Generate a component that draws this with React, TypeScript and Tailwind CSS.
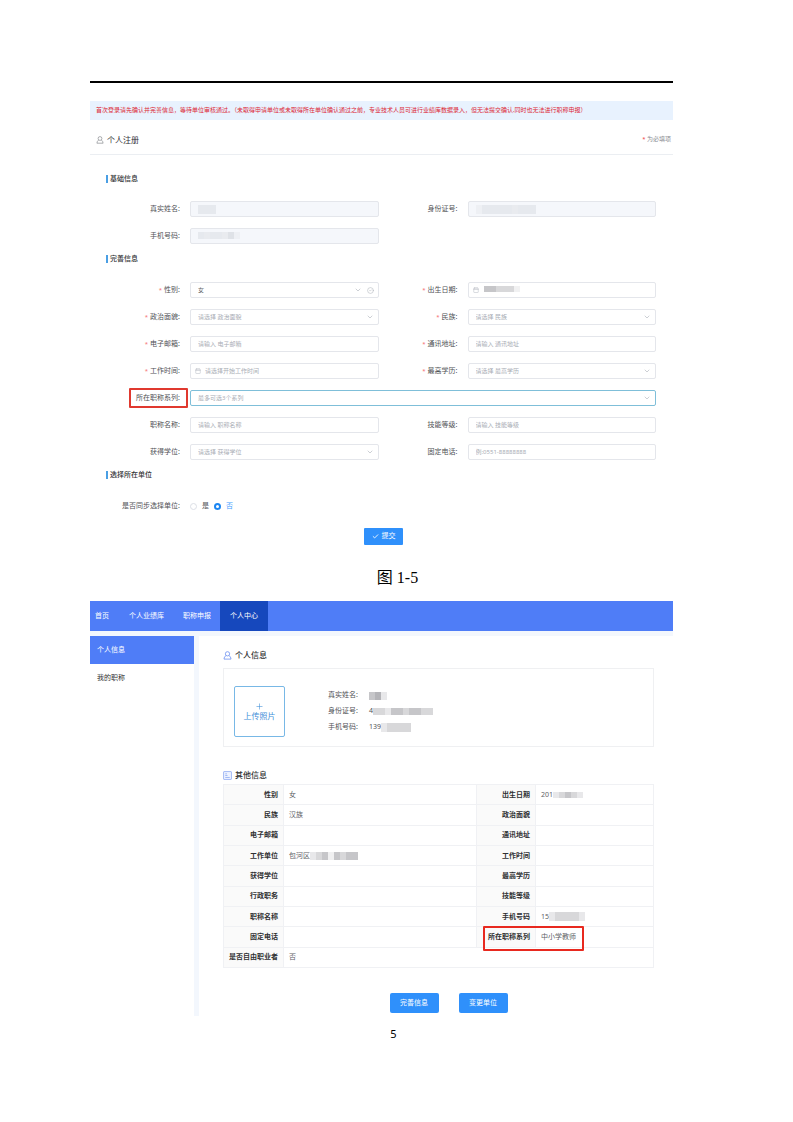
import { Calendar, Check, ChevronDown, CircleCheck, Plus } from 'lucide-react';
import type { ReactNode } from 'react';

function UserIcon({ className }: { className: string }) {
  return (
    <svg viewBox="0 0 16 16" className={className} fill="none" stroke="currentColor" strokeWidth="1.3">
      <circle cx="8" cy="5" r="3.8" />
      <path d="M5.2 8.2C3.2 9.4 2 11.6 1.8 14.4h12.4c-.2-2.8-1.4-5-3.4-6.2" strokeLinejoin="round" />
    </svg>
  );
}

function ListIcon({ className }: { className: string }) {
  return (
    <svg viewBox="0 0 16 16" className={className} fill="#eef3ff" stroke="currentColor" strokeWidth="1.2">
      <rect x="1" y="1" width="14" height="14" rx="1" />
      <path d="M4 5h3M4 8h4M4 11.5h8" />
    </svg>
  );
}

// pixelated strip that hides personal data
function Mosaic({ cells, className = 'h-[7px]' }: { cells: string[]; className?: string }) {
  return (
    <span className={`inline-flex shrink-0 ${className}`}>
      {cells.map((color, i) => (
        <span key={i} className={`h-full w-[6px] ${color}`} />
      ))}
    </span>
  );
}

const faint = 'bg-[#e6e9ee]';
const light = 'bg-[#e8e8ea]';
const mid = 'bg-[#d8d8da]';
const dark = 'bg-[#c6c6c9]';

function SectionTitle({ children, className }: { children: ReactNode; className: string }) {
  return (
    <h3 className={`ml-4 flex h-2 items-center border-l-2 border-[#4a9fe4] pl-[2px] text-[7px] font-medium text-[#303133] ${className}`}>
      {children}
    </h3>
  );
}

type FieldProps = {
  id: string;
  label: string;
  kind?: 'input' | 'select' | 'date';
  hint?: string;
  value?: string;
  required?: boolean;
  disabled?: boolean;
  checked?: boolean;
  wide?: boolean;
  mask?: ReactNode;
};

function Field({ id, label, kind = 'input', hint, value, required, disabled, checked, wide, mask }: FieldProps) {
  const border = wide ? 'border-[#7fbfd9]' : 'border-[#e4e6eb]';
  const bg = disabled ? 'bg-[#f5f7fb]' : 'bg-white';
  const pad = kind === 'date' ? 'pl-[14px]' : 'pl-[7px]';
  const color = value ? 'text-[#606266]' : 'text-[#a9adb5]';
  const box = `block h-4 w-full appearance-none rounded-[2px] border text-[6px] leading-none outline-none placeholder:text-[#a9adb5] ${border} ${bg} ${pad} ${color}`;

  return (
    <>
      <label
        htmlFor={id}
        className={`flex h-4 items-center justify-end whitespace-nowrap text-[7px] text-[#505256] ${wide ? 'pr-[2px]' : 'pr-[10px]'}`}
      >
        {required && <span className="mr-[2px] text-[6px] text-[#f56c6c]">*</span>}
        {wide ? (
          <span className="flex h-[20px] shrink-0 items-center rounded-[1px] border-2 border-[#e0392f] px-[6px] pl-[5px]">{label}:</span>
        ) : (
          `${label}:`
        )}
      </label>
      <div className={`relative ${wide ? 'col-span-3' : ''}`}>
        {kind === 'select' ? (
          <select id={id} className={box}>
            <option>{value || hint}</option>
          </select>
        ) : (
          <input id={id} type="text" placeholder={hint} disabled={disabled} className={box} />
        )}
        {kind === 'date' && <Calendar className="absolute top-[5px] left-[5px] size-[6px] text-[#b4b8c0]" />}
        {kind === 'select' && (
          <ChevronDown
            className={`pointer-events-none absolute top-1 size-2 text-[#b4b8c0] ${checked ? 'right-[17px]' : 'right-[5px]'}`}
          />
        )}
        {checked && <CircleCheck className="absolute top-[5px] right-[5px] size-[7px] text-[#b4b8c0]" />}
        {mask && <span className={`absolute top-1 flex ${kind === 'date' ? 'left-4' : 'left-2'}`}>{mask}</span>}
      </div>
    </>
  );
}

const formGrid = 'grid grid-cols-[100px_1fr_89px_1fr] gap-y-[11px] pr-[17px]';

function RegisterForm() {
  return (
    <section>
      <p className="mt-[18px] flex h-[19px] items-center whitespace-nowrap bg-[#e8f2fe] pl-[6px] text-[6px] text-[#dc1f35]">
        首次登录请先确认并完善信息，等待单位审核通过。（未取得申请单位或未取得所在单位确认通过之前，专业技术人员可进行业绩库数据录入，但无法提交确认,同时也无法进行职称申报）
      </p>
      <div className="flex h-[35px] items-center border-b border-[#ebeef2] px-[6px] pt-[5px] pr-[2px]">
        <UserIcon className="size-2 text-[#808388]" />
        <h2 className="ml-[3px] text-[8px] text-[#303133]">个人注册</h2>
        <span className="ml-auto text-[6px] text-[#8a8d93]">
          <span className="text-[#f04040]">*</span> 为必填项
        </span>
      </div>

      <form>
        <SectionTitle className="mt-5">基础信息</SectionTitle>
        <div className={`mt-[18px] ${formGrid}`}>
          <Field id="name" label="真实姓名" disabled mask={<Mosaic cells={[faint, faint, faint]} className="h-[9px]" />} />
          <Field
            id="idcard"
            label="身份证号"
            disabled
            mask={<Mosaic cells={['bg-[#eef0f4]', faint, faint, faint, faint, faint, 'bg-[#e9ebef]', faint, faint, faint]} className="h-[9px]" />}
          />
          <Field
            id="mobile"
            label="手机号码"
            disabled
            mask={<Mosaic cells={[faint, 'bg-[#e9ebef]', faint, faint, 'bg-[#e9ebef]', 'bg-[#dfe2e7]', 'bg-[#eef0f4]']} />}
          />
        </div>

        <SectionTitle className="mt-[11px]">完善信息</SectionTitle>
        <div className={`mt-[19px] ${formGrid}`}>
          <Field id="gender" label="性别" kind="select" value="女" required checked />
          <Field
            id="birth"
            label="出生日期"
            kind="date"
            required
            mask={<Mosaic cells={[dark, dark, mid, mid, mid, 'bg-[#f1f1f2]']} className="h-[6px]" />}
          />
          <Field id="politics" label="政治面貌" kind="select" hint="请选择 政治面貌" required />
          <Field id="nation" label="民族" kind="select" hint="请选择 民族" required />
          <Field id="email" label="电子邮箱" hint="请输入 电子邮箱" required />
          <Field id="address" label="通讯地址" hint="请输入 通讯地址" required />
          <Field id="worktime" label="工作时间" kind="date" hint="请选择开始工作时间" required />
          <Field id="education" label="最高学历" kind="select" hint="请选择 最高学历" required />
          <Field id="series" label="所在职称系列" kind="select" hint="最多可选3个系列" wide />
          <Field id="title" label="职称名称" hint="请输入 职称名称" />
          <Field id="skill" label="技能等级" hint="请输入 技能等级" />
          <Field id="degree" label="获得学位" kind="select" hint="请选择 获得学位" />
          <Field id="phone" label="固定电话" hint="例:0551-88888888" />
        </div>

        <SectionTitle className="mt-[11px]">选择所在单位</SectionTitle>
        <fieldset className="mt-[23px] flex h-2 items-center text-[7px] text-[#505256]">
          <span className="w-[90px] text-right">是否同步选择单位:</span>
          <label className="ml-[10px] flex items-center gap-[5px]">
            <input type="radio" name="sync" className="size-[7px] appearance-none rounded-full border border-[#dcdfe6] checked:border-2 checked:border-[#1c86f2]" />
            是
          </label>
          <label className="ml-[5px] flex items-center gap-[5px] text-[#409eff]">
            <input
              type="radio"
              name="sync"
              defaultChecked
              className="size-[7px] appearance-none rounded-full border border-[#dcdfe6] checked:border-2 checked:border-[#1c86f2]"
            />
            否
          </label>
        </fieldset>

        <div className="mt-[18px] flex justify-center pl-1">
          <button type="button" className="flex h-[17px] w-[39px] items-center justify-center gap-[3px] rounded-[1px] bg-[#2f90fb] text-[7px] text-white">
            <Check className="size-[7px]" strokeWidth={3} />
            提交
          </button>
        </div>
      </form>
    </section>
  );
}

type Cell = { label: string; value?: string; mask?: ReactNode; marked?: boolean };

const rows: [Cell, Cell?][] = [
  [
    { label: '性别', value: '女' },
    { label: '出生日期', value: '201', mask: <Mosaic cells={[light, mid, dark, mid, light]} className="h-[6px]" /> },
  ],
  [{ label: '民族', value: '汉族' }, { label: '政治面貌' }],
  [{ label: '电子邮箱' }, { label: '通讯地址' }],
  [
    {
      label: '工作单位',
      value: '包河区',
      mask: <Mosaic cells={[light, mid, dark, 'bg-[#f0f0f1]', dark, mid, dark, dark]} className="h-[8px]" />,
    },
    { label: '工作时间' },
  ],
  [{ label: '获得学位' }, { label: '最高学历' }],
  [{ label: '行政职务' }, { label: '技能等级' }],
  [
    { label: '职称名称' },
    { label: '手机号码', value: '15', mask: <Mosaic cells={[light, mid, mid, mid, mid, light]} className="h-[9px]" /> },
  ],
  [{ label: '固定电话' }, { label: '所在职称系列', value: '中小学教师', marked: true }],
  [{ label: '是否自由职业者', value: '否' }],
];

function InfoCells({ cell, span }: { cell: Cell; span?: number }) {
  return (
    <>
      <th scope="row" className="relative border border-[#f0f1f4] bg-[#fafafa] p-0 pr-[5px] text-right font-bold whitespace-nowrap text-[#303133]">
        {cell.label}
        {cell.marked && (
          <span className="absolute -top-px left-[6px] h-[25px] w-[101px] rounded-[1px] border-2 border-[#e8291f]" />
        )}
      </th>
      <td colSpan={span} className="border border-[#f0f1f4] p-0 pl-[5px] text-[#606266]">
        <span className="flex items-center">
          {cell.value}
          {cell.mask}
        </span>
      </td>
    </>
  );
}

const navItems = ['个人业绩库', '职称申报'];

const person = [
  { label: '真实姓名', value: '', mask: <Mosaic cells={[dark, 'bg-[#b4b4b8]', light]} className="h-[8px]" /> },
  { label: '身份证号', value: '4', mask: <Mosaic cells={[mid, mid, light, dark, dark, mid, dark, dark, mid, mid]} className="h-[7px]" /> },
  { label: '手机号码', value: '139', mask: <Mosaic cells={[light, mid, mid, mid, mid]} className="h-[9px]" /> },
];

function PersonalCenter() {
  return (
    <section className="text-[7px]">
      <nav className="flex h-[30px] bg-[#4f7df7] text-white">
        <a href="#home" className="flex items-center pr-[10px] pl-[5px]">首页</a>
        {navItems.map((item) => (
          <a key={item} href="#nav" className="flex items-center pr-[9px] pl-[10px]">
            {item}
          </a>
        ))}
        <a href="#center" className="flex items-center bg-[#1648bd] px-[10px]">个人中心</a>
      </nav>

      <div className="flex border-t-[5px] border-[#f3f7fd]">
        <aside className="w-[104px] shrink-0">
          <a href="#info" className="flex h-7 items-center bg-[#4f7df7] pl-[7px] text-white">个人信息</a>
          <a href="#titles" className="flex h-7 items-center pl-[7px] text-[#303133]">我的职称</a>
        </aside>

        <div className="min-w-0 flex-1 border-l-[5px] border-[#f3f7fd] pt-[14px] pr-[19px] pb-[3px] pl-6">
          <h2 className="flex h-[10px] items-center gap-[3px] text-[8px] font-medium text-[#303133]">
            <UserIcon className="size-[9px] text-[#5f86ee]" />
            个人信息
          </h2>
          <div className="mt-2 flex items-center border border-[#eff0f2] pt-[17px] pb-[9px] pl-[10px]">
            <button type="button" className="flex h-[51px] w-[51px] flex-col items-center justify-center rounded-[2px] border border-[#78b8e6] text-[8px] leading-[10px] text-[#3f8ed8]">
              <Plus className="size-[9px]" strokeWidth={1.5} />
              上传照片
            </button>
            <dl className="ml-[43px] text-[#505256]">
              {person.map((p) => (
                <div key={p.label} className="flex h-4 items-center">
                  <dt className="w-[41px]">{p.label}:</dt>
                  <dd className="flex items-center">
                    {p.value}
                    {p.mask}
                  </dd>
                </div>
              ))}
            </dl>
          </div>

          <h2 className="mt-[23px] flex h-[10px] items-center gap-[3px] text-[8px] font-medium text-[#303133]">
            <ListIcon className="size-[9px] text-[#7c9cf0]" />
            其他信息
          </h2>
          <table className="mt-1 h-[184px] w-full table-fixed border-collapse leading-[10px]">
            <colgroup>
              <col className="w-[60px]" />
              <col />
              <col className="w-[59px]" />
              <col className="w-[118px]" />
            </colgroup>
            <tbody>
              {rows.map(([left, right]) => (
                <tr key={left.label}>
                  <InfoCells cell={left} span={right ? 1 : 3} />
                  {right && <InfoCells cell={right} />}
                </tr>
              ))}
            </tbody>
          </table>

          <div className="mt-[25px] flex justify-center gap-5 pl-5 text-white">
            <button type="button" className="h-5 w-[49px] rounded-[2px] bg-[#2f90fb]">完善信息</button>
            <button type="button" className="h-5 w-[49px] rounded-[2px] bg-[#2f90fb]">变更单位</button>
          </div>
        </div>
      </div>
    </section>
  );
}

export default function App() {
  return (
    <main className="min-h-screen bg-white pt-[81px] pr-[120px] pb-20 pl-[90px] font-['Noto_Sans','Noto_Sans_CJK_SC',sans-serif]">
      <hr className="h-[2px] border-0 bg-black" />
      <RegisterForm />
      <p className="mt-6 mb-[14px] h-[18px] pl-8 text-center font-['Liberation_Serif','Noto_Sans_CJK_SC',serif] text-[16px] leading-[18px] text-black">
        图 1-5
      </p>
      <PersonalCenter />
      <footer className="mt-3 pl-6 text-center text-[11px] leading-[12px] text-black">5</footer>
    </main>
  );
}
